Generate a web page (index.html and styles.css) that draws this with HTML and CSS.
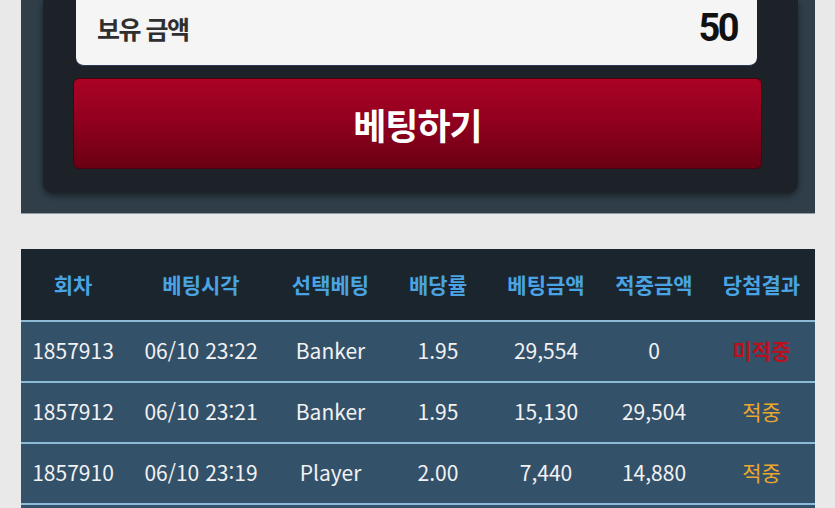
FILE: index.html
```html
<!DOCTYPE html>
<html lang="ko">
<head>
  <meta charset="UTF-8">
  <meta name="viewport" content="width=device-width, initial-scale=1.0">
  <title>베팅</title>
  <link rel="stylesheet" href="styles.css">
</head>
<body>
  <div class="page">
    <div class="bet-panel">
      <div class="bet-inner">
        <div class="balance">
          <span class="balance-label">보유 금액</span>
          <span class="balance-value">50</span>
        </div>
        <button class="bet-btn">베팅하기</button>
      </div>
    </div>

    <table class="history">
      <colgroup>
        <col style="width:104px">
        <col style="width:152px">
        <col style="width:107px">
        <col style="width:108px">
        <col style="width:108px">
        <col style="width:108px">
        <col style="width:107px">
      </colgroup>
      <thead>
        <tr>
          <th>회차</th>
          <th>베팅시각</th>
          <th>선택베팅</th>
          <th>배당률</th>
          <th>베팅금액</th>
          <th>적중금액</th>
          <th>당첨결과</th>
        </tr>
      </thead>
      <tbody>
        <tr>
          <td>1857913</td>
          <td>06/10 23:22</td>
          <td>Banker</td>
          <td>1.95</td>
          <td>29,554</td>
          <td>0</td>
          <td class="lose">미적중</td>
        </tr>
        <tr>
          <td>1857912</td>
          <td>06/10 23:21</td>
          <td>Banker</td>
          <td>1.95</td>
          <td>15,130</td>
          <td>29,504</td>
          <td class="win">적중</td>
        </tr>
        <tr>
          <td>1857910</td>
          <td>06/10 23:19</td>
          <td>Player</td>
          <td>2.00</td>
          <td>7,440</td>
          <td>14,880</td>
          <td class="win">적중</td>
        </tr>
      </tbody>
    </table>
    <div class="more-row"></div>
  </div>
</body>
</html>
```

FILE: styles.css
```css
* { margin: 0; padding: 0; box-sizing: border-box; }
body {
  font-family: "Noto Sans CJK KR", "Noto Sans", sans-serif;
  background: #e9e9e9;
  color: #333;
  overflow: hidden;
}
.page {
  width: 794px;
  margin-left: 21px;
}
.bet-panel {
  background: #2f3e49;
  border-bottom: 1px solid #8c9ba6;
  padding: 0 17px 20px 22px;
}
.bet-inner {
  background: #1c2227;
  border-radius: 0 0 10px 10px;
  box-shadow: 0 3px 6px rgba(0, 0, 0, 0.45);
  padding: 0 36px 24px 30px;
}
.balance {
  height: 66px;
  margin: 0 5px 0 3px;
  background: #f5f5f5;
  border-radius: 0 0 8px 8px;
  border-bottom: 1px solid #2b3a5c;
  display: flex;
  align-items: center;
  justify-content: space-between;
  padding: 0 20px 10px 21px;
}
.balance-label {
  font-size: 25px;
  font-weight: 700;
  color: #2f2f2f;
  letter-spacing: -1.5px;
}
.balance-value {
  font-family: Roboto, "Liberation Sans", sans-serif;
  font-size: 38px;
  font-weight: 700;
  color: #111;
  letter-spacing: -2.5px;
}
.bet-btn {
  display: block;
  width: 100%;
  height: 91px;
  margin-top: 12px;
  border: 1px solid #4a0010;
  border-radius: 6px;
  background: linear-gradient(#aa0324, #930020 45%, #6a0013);
  color: #fff;
  font-family: inherit;
  font-size: 36px;
  font-weight: 700;
  letter-spacing: -1px;
  cursor: pointer;
}
.history {
  width: 794px;
  margin-top: 35px;
  border-collapse: collapse;
  table-layout: fixed;
}
.history th {
  height: 72px;
  padding-bottom: 2px;
  background: #1b252d;
  color: #4aa3e2;
  font-size: 21px;
  font-weight: 700;
  text-align: center;
  border-bottom: 2px solid #8dbad6;
}
.history td {
  height: 61px;
  padding-bottom: 3px;
  background: #34516a;
  color: #f2f2f2;
  font-size: 21px;
  text-align: center;
  white-space: nowrap;
  border-bottom: 2px solid #8dbad6;
}
.history td.lose {
  color: #bb101e;
  font-weight: 700;
}
.history td.win {
  color: #eda62c;
}
.more-row {
  height: 20px;
  background: #34516a;
}
```
